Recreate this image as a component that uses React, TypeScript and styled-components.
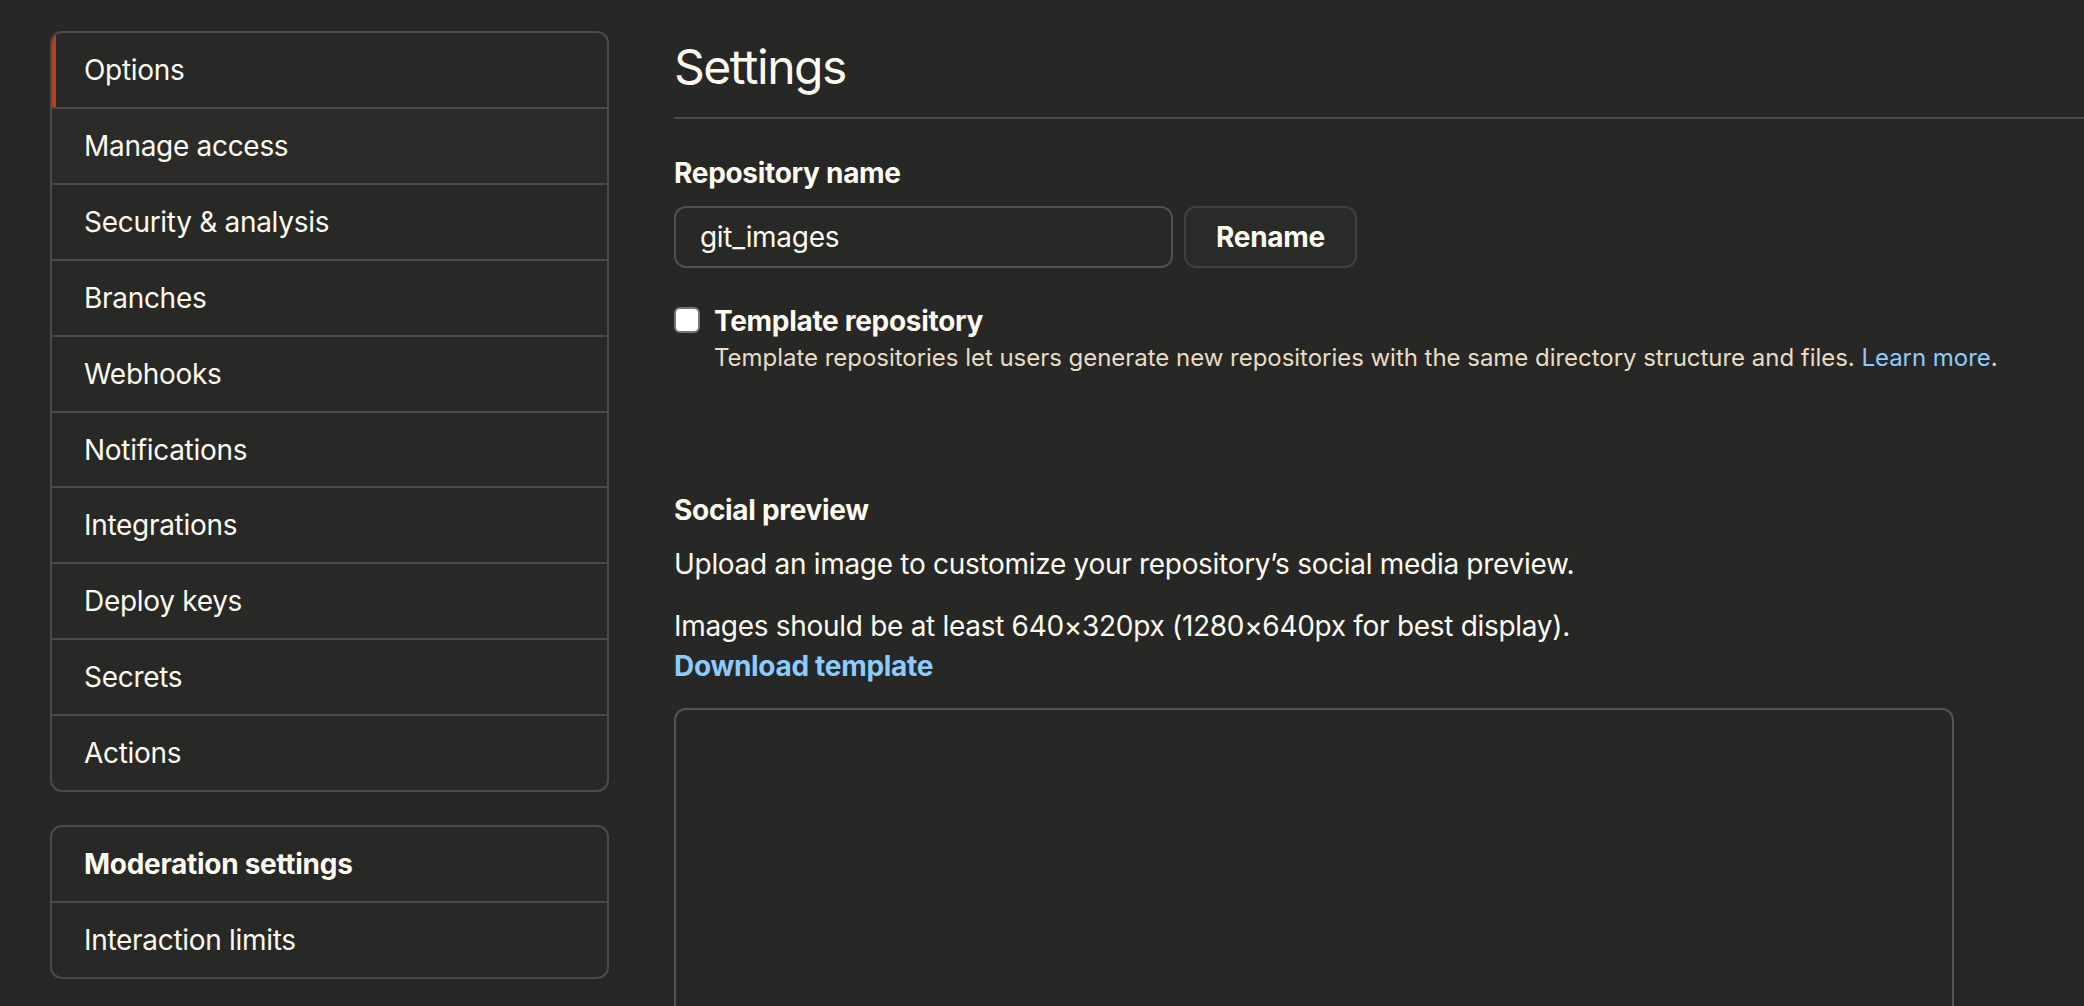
import React from "react";
import styled, { createGlobalStyle } from "styled-components";

const GlobalStyle = createGlobalStyle`
  html, body {
    margin: 0;
    padding: 0;
    background: #272725;
    color: #fdfaf0;
    font-family: Inter, "Noto Sans", "Liberation Sans", sans-serif;
    letter-spacing: -0.3px;
    overflow: hidden;
  }
  * {
    box-sizing: border-box;
  }
`;

const menuItems = [
  "Options",
  "Manage access",
  "Security & analysis",
  "Branches",
  "Webhooks",
  "Notifications",
  "Integrations",
  "Deploy keys",
  "Secrets",
  "Actions",
];

const App: React.FC = () => {
  return (
    <>
      <GlobalStyle />
      <Page>
        <Sidebar>
          <MenuBox>
            {menuItems.map((item, i) => (
              <MenuItem key={item} $selected={i === 0} $hover={i === 1}>
                {item}
              </MenuItem>
            ))}
          </MenuBox>
          <MenuBox>
            <MenuHeading>Moderation settings</MenuHeading>
            <MenuItem>Interaction limits</MenuItem>
          </MenuBox>
        </Sidebar>

        <Main>
          <Subhead>Settings</Subhead>

          <Label>Repository name</Label>
          <InputRow>
            <TextInput defaultValue="git_images" spellCheck={false} />
            <Button>Rename</Button>
          </InputRow>

          <CheckRow>
            <CheckBox />
            <CheckLabel>Template repository</CheckLabel>
          </CheckRow>
          <Note>
            Template repositories let users generate new repositories with the
            same directory structure and files. <NoteLink>Learn more</NoteLink>.
          </Note>

          <SectionLabel>Social preview</SectionLabel>
          <Text>
            Upload an image to customize your repository’s social media
            preview.
          </Text>
          <Text $gap>
            Images should be at least 640×320px (1280×640px for best display).
            <br />
            <BoldLink>Download template</BoldLink>
          </Text>

          <PreviewBox />
        </Main>
      </Page>
    </>
  );
};

export default App;

const Page = styled.div`
  display: flex;
  align-items: flex-start;
  padding: 31px 0 0 50px;
  width: 2084px;
  height: 1006px;
`;

const Sidebar = styled.nav`
  width: 559px;
  flex-shrink: 0;
  display: flex;
  flex-direction: column;
  gap: 33px;
`;

const MenuBox = styled.div`
  border: 2px solid #4b4a48;
  border-radius: 12px;
  overflow: hidden;
  background: #282826;
`;

const MenuItem = styled.div<{ $selected?: boolean; $hover?: boolean }>`
  position: relative;
  height: 74px;
  display: flex;
  align-items: center;
  padding: 0 32px;
  font-size: 28px;
  color: #fdfaf0;
  background: ${({ $hover }) => ($hover ? "#2c2b29" : "transparent")};

  & + & {
    height: 75.9px;
    border-top: 2px solid #4b4a48;
  }

  ${({ $selected }) =>
    $selected &&
    `
    &::before {
      content: "";
      position: absolute;
      left: 0;
      top: 0;
      bottom: 0;
      width: 4px;
      background: #b3401f;
    }
  `}
`;

const MenuHeading = styled(MenuItem)`
  font-weight: 700;
`;

const Main = styled.main`
  flex: 1;
  margin-left: 65px;
  min-width: 0;
`;

const Subhead = styled.h2`
  margin: 6px 0 0;
  padding-bottom: 20px;
  border-bottom: 2px solid #4b4a48;
  font-size: 48px;
  line-height: 60px;
  font-weight: 400;
  letter-spacing: -1.5px;
  color: #fdfaf0;
`;

const Label = styled.div`
  margin-top: 34px;
  font-size: 28px;
  line-height: 40px;
  font-weight: 700;
`;

const InputRow = styled.div`
  display: flex;
  gap: 11px;
  margin-top: 13px;
`;

const TextInput = styled.input`
  width: 499px;
  height: 62px;
  padding: 0 24px;
  background: #282826;
  border: 2px solid #51504e;
  border-radius: 12px;
  color: #fdfaf0;
  font-family: inherit;
  font-size: 28px;
  letter-spacing: inherit;
  outline: none;
`;

const Button = styled.button`
  width: 173px;
  height: 62px;
  background: #2a2a28;
  border: 2px solid #41403e;
  border-radius: 12px;
  color: #fdfaf0;
  font-family: inherit;
  font-size: 28px;
  font-weight: 700;
  letter-spacing: inherit;
`;

const CheckRow = styled.div`
  display: flex;
  align-items: flex-start;
  gap: 14px;
  margin-top: 33px;
`;

const CheckBox = styled.span`
  width: 26px;
  height: 26px;
  margin-top: 6px;
  background: #ffffff;
  border: 2px solid #767674;
  border-radius: 6px;
`;

const CheckLabel = styled.span`
  font-size: 28px;
  line-height: 40px;
  font-weight: 700;
`;

const Note = styled.p`
  margin: 0;
  padding-left: 40px;
  font-size: 24px;
  line-height: 34px;
  letter-spacing: -0.03px;
  color: #e8dcc6;
`;

const NoteLink = styled.a`
  color: #8ccbff;
`;

const SectionLabel = styled.div`
  margin-top: 115px;
  font-size: 28px;
  line-height: 40px;
  font-weight: 700;
`;

const Text = styled.p<{ $gap?: boolean }>`
  margin: ${({ $gap }) => ($gap ? "22px 0 0" : "14px 0 0")};
  font-size: 28px;
  line-height: 40px;
`;

const BoldLink = styled.a`
  color: #8ccbff;
  font-weight: 700;
`;

const PreviewBox = styled.div`
  margin-top: 22px;
  width: 1280px;
  height: 640px;
  border: 2px solid #555452;
  border-radius: 12px;
`;
